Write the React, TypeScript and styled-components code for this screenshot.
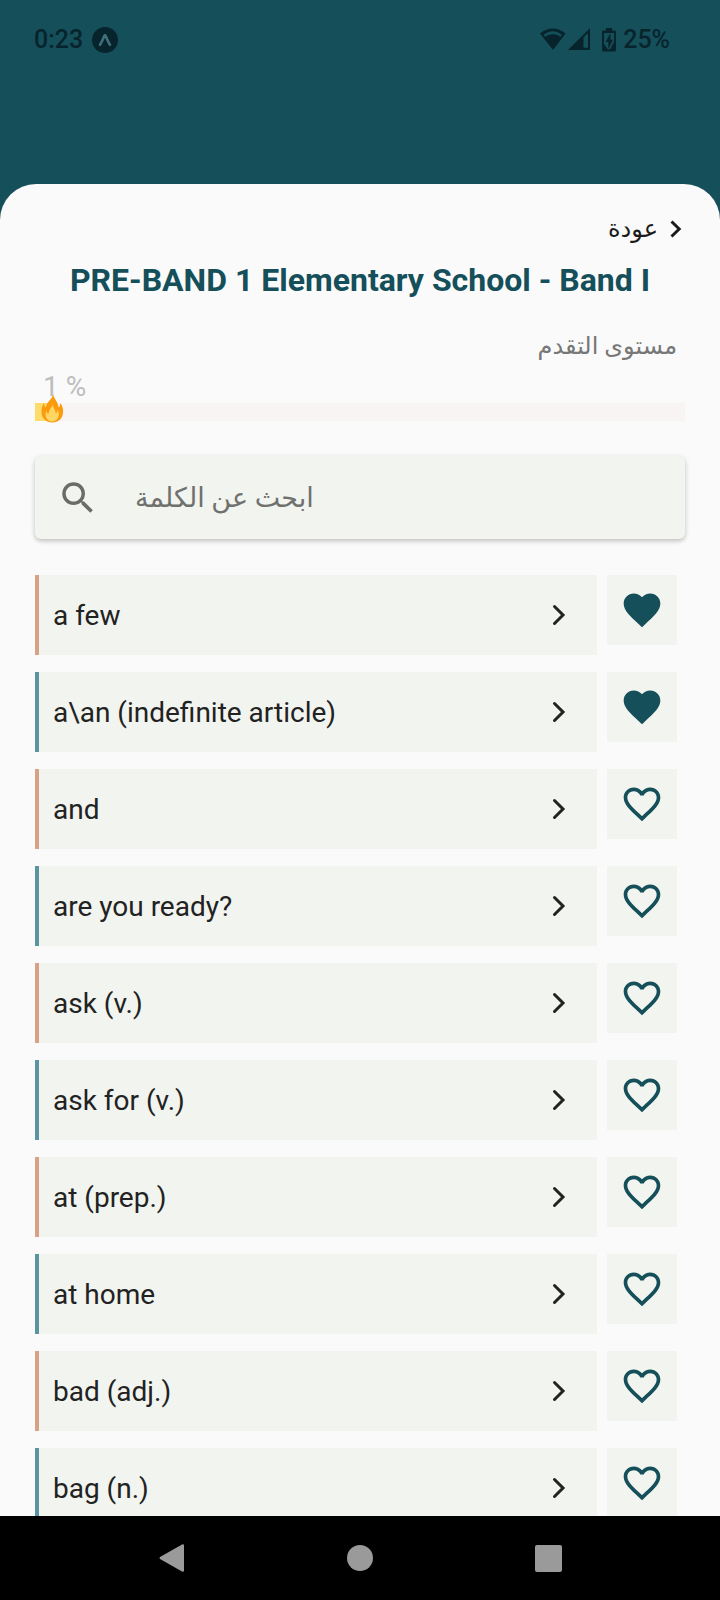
import React, { useState } from "react";
import styled, { createGlobalStyle } from "styled-components";
import { MdFavorite, MdFavoriteBorder, MdSearch } from "react-icons/md";

const GlobalStyle = createGlobalStyle`
  * { box-sizing: border-box; }
  body { margin: 0; background: #fafafa; font-family: Roboto, "DejaVu Sans", sans-serif; }
  button, input { font-family: inherit; margin: 0; padding: 0; border: 0; background: none; color: inherit; }
  button { cursor: pointer; }
  h1, p, ul { margin: 0; padding: 0; }
  svg { display: block; flex: none; }
`;

const Screen = styled.div`
  display: flex;
  flex-direction: column;
  height: 100vh;
  background: #154f5a;
`;

const StatusBar = styled.header`
  display: flex;
  justify-content: space-between;
  align-items: center;
  height: 80px;
  margin-bottom: 104px;
  padding: 0 50px 0 34px;
  color: #07242d;
  font-size: 25px;
  font-weight: 500;
  line-height: 32px;
  flex: none;
`;

const StatusGroup = styled.div<{ $gap: number }>`
  display: flex;
  align-items: center;
  gap: ${(p) => p.$gap}px;
`;

const Sheet = styled.main`
  display: flex;
  flex-direction: column;
  flex: 1;
  min-height: 0;
  overflow: hidden;
  padding: 28px 35px 0;
  border-radius: 36px 36px 0 0;
  background: #fafafa;
`;

const BackButton = styled.button`
  display: flex;
  align-items: center;
  align-self: flex-start;
  gap: 12px;
  height: 34px;
  padding: 0 3px;
  color: #1b1b1b;
  font-size: 24px;
  line-height: 34px;
`;

const BackRow = styled.nav`
  display: flex;
  flex: none;
`;

const Title = styled.h1`
  margin-top: 14px;
  color: #154f5a;
  font-size: 32px;
  font-weight: 700;
  line-height: 40px;
  text-align: center;
`;

const ProgressLabel = styled.p`
  margin-top: 28px;
  padding: 0 8px;
  color: #777777;
  font-size: 24px;
  line-height: 36px;
`;

const Percent = styled.p`
  margin-top: 8px;
  padding: 0 8px;
  color: #bdbdbd;
  font-size: 28px;
  line-height: 30px;
`;

const Track = styled.div`
  position: relative;
  flex: none;
  height: 18px;
  margin-top: 1px;
  background: #f8f4f4;
`;

const Fill = styled.div`
  width: 16px;
  height: 100%;
  background: #fddc6c;
`;

const Flame = styled.svg`
  position: absolute;
  left: 6px;
  bottom: -2px;
`;

const SearchBox = styled.label`
  display: flex;
  align-items: center;
  flex: none;
  gap: 36px;
  height: 83px;
  margin-top: 35px;
  padding: 0 22px;
  border-radius: 6px;
  background: #f2f4ef;
  color: #6a6c69;
  box-shadow: 0 2px 5px rgba(0, 0, 0, 0.24);
`;

const SearchInput = styled.input`
  flex: 1;
  min-width: 0;
  height: 48px;
  outline: none;
  font-size: 27px;
  &::placeholder { color: #6f716e; opacity: 1; }
`;

const WordList = styled.ul`
  display: flex;
  flex-direction: column;
  gap: 17px;
  margin-top: 36px;
  list-style: none;
`;

const WordRow = styled.li`
  display: flex;
  align-items: flex-start;
  gap: 10px;
  padding-right: 8px;
`;

const WordButton = styled.button<{ $accent: string }>`
  display: flex;
  align-items: center;
  justify-content: space-between;
  flex: 1;
  height: 80px;
  padding: 0 31px 0 14px;
  border-left: 4px solid ${(p) => p.$accent};
  background: #f2f4ef;
  color: #222222;
  font-size: 28px;
  line-height: 36px;
  text-align: left;
`;

const WordText = styled.span`
  padding-top: 2px;
`;

const HeartButton = styled.button`
  display: flex;
  align-items: center;
  justify-content: center;
  width: 70px;
  height: 70px;
  background: #f2f4ef;
  color: #154f5a;
`;

const SystemNav = styled.nav`
  display: flex;
  flex: none;
  height: 84px;
  padding: 0 78px;
  background: #000000;
`;

const NavButton = styled.button`
  display: flex;
  align-items: center;
  justify-content: center;
  flex: 1;
  color: #9a9a9a;
`;

const words = [
  "a few",
  "a\\an (indefinite article)",
  "and",
  "are you ready?",
  "ask (v.)",
  "ask for (v.)",
  "at (prep.)",
  "at home",
  "bad (adj.)",
  "bag (n.)",
];

const ExpoBadge = () => (
  <svg width="26" height="26" viewBox="0 0 26 26" aria-hidden="true">
    <circle cx="13" cy="13" r="13" fill="currentColor" />
    <path d="M8 17.800C10 15 11.500 11 12.300 9Q13 7.600 13.700 9C14.500 11 16 15 18 17.800" fill="none" stroke="#3f7079" strokeWidth="2.600" strokeLinecap="round" />
  </svg>
);

const SignalIcons = () => (
  <svg width="50" height="24" viewBox="0 0 50 24" aria-hidden="true">
    <path d="M0 5.500Q12.500-4.500 25.500 5.500L13 22Z" fill="currentColor" />
    <path d="M3.600 7Q12.800-.5 22 7L20.600 8.800Q12.800 3.200 5 8.800Z" fill="#154f5a" />
    <path d="M50 0V22H28Z" fill="currentColor" />
    <path d="M48 5V19.800H43.500V9.500Z" fill="#154f5a" />
  </svg>
);

const BatteryIcon = () => (
  <svg width="14" height="24" viewBox="0 0 14 24" aria-hidden="true">
    <path d="M4 0H10V2.500H12.500Q14 2.500 14 4V22Q14 23.500 12.500 23.500H1.500Q0 23.500 0 22V4Q0 2.500 1.500 2.500H4Z" fill="currentColor" />
    <path d="M2 5H12V20L7 21.500L2 20Z" fill="#154f5a" />
    <path d="M8.500 5L3.500 14H6.300V21L11 11.800H8.500Z" fill="currentColor" />
    <path d="M2 16L6 21.500H2ZM12 14L8 21.500H12Z" fill="currentColor" />
  </svg>
);

const RowChevron = () => (
  <svg width="14" height="22" viewBox="0 0 14 22" aria-hidden="true">
    <path d="M2.500 2.500L11 11L2.500 19.500" fill="none" stroke="currentColor" strokeWidth="3" strokeLinecap="round" />
  </svg>
);

const BackChevron = () => (
  <svg width="12" height="18" viewBox="0 0 12 18" aria-hidden="true">
    <path d="M1.500 1.500L9.200 9L1.500 16.500" fill="none" stroke="currentColor" strokeWidth="3" />
  </svg>
);

const WordItem = ({ word, index }: { word: string; index: number }) => {
  const [liked, setLiked] = useState(index < 2);
  return (
    <WordRow>
      <WordButton $accent={index % 2 === 0 ? "#d6a283" : "#58959e"}>
        <WordText>{word}</WordText>
        <RowChevron />
      </WordButton>
      <HeartButton aria-label={`Favorite ${word}`} aria-pressed={liked} onClick={() => setLiked(!liked)}>
        {liked ? <MdFavorite size={44} /> : <MdFavoriteBorder size={44} />}
      </HeartButton>
    </WordRow>
  );
};

export default function App() {
  return (
    <>
      <GlobalStyle />
      <Screen>
        <StatusBar>
          <StatusGroup $gap={9}>
            0:23
            <ExpoBadge />
          </StatusGroup>
          <StatusGroup $gap={7}>
            <StatusGroup $gap={12}>
              <SignalIcons />
              <BatteryIcon />
            </StatusGroup>
            25%
          </StatusGroup>
        </StatusBar>
        <Sheet>
          <BackRow dir="rtl">
            <BackButton>
              <BackChevron />
              عودة
            </BackButton>
          </BackRow>
          <Title>PRE-BAND 1 Elementary School - Band I</Title>
          <ProgressLabel id="progress-label" dir="rtl">مستوى التقدم</ProgressLabel>
          <Percent>1 %</Percent>
          <Track role="progressbar" aria-labelledby="progress-label" aria-valuenow={1} aria-valuemin={0} aria-valuemax={100}>
            <Fill />
            <Flame width="23" height="29" viewBox="0 0 23 29" aria-hidden="true">
              <path d="M12.200 0C12.500 4.500 17.500 8 17.600 13.500C18.800 12.500 19.300 11 19 9C21.500 11.500 22.500 15 22 19C21.400 25 17 28.500 11.500 28.500C5 28.500 .5 24 .5 18C.5 14 1.500 11 3.200 8.500C3 11 3.500 12.500 5 13.500C5 8 11.500 5.500 12.200 0Z" fill="#fb9a0c" />
              <path d="M11.500 10C11.500 13 14.500 15 14.800 19.500C16 18.500 16.600 17 16.600 15.500C19 20 18 27 11.500 27.500C5 27.500 3.500 21.500 5.200 16.500C5.500 18 6.200 19.500 7.600 20C7.500 16 11 14 11.500 10Z" fill="#fdd663" />
            </Flame>
          </Track>
          <SearchBox>
            <MdSearch size={42} aria-hidden="true" />
            <SearchInput type="text" aria-label="ابحث عن الكلمة" placeholder="ابحث عن الكلمة" />
          </SearchBox>
          <WordList>
            {words.map((word, i) => (
              <WordItem key={word} word={word} index={i} />
            ))}
          </WordList>
        </Sheet>
        <SystemNav>
          <NavButton aria-label="Back">
            <svg width="26" height="28" viewBox="0 0 26 28"><path d="M23.500.3Q25 0 25 1.500V26.500Q25 28 23.500 27.700L1 15Q0 14 1 13Z" fill="currentColor" /></svg>
          </NavButton>
          <NavButton aria-label="Home">
            <svg width="26" height="26" viewBox="0 0 26 26"><circle cx="13" cy="13" r="13" fill="currentColor" /></svg>
          </NavButton>
          <NavButton aria-label="Recent apps">
            <svg width="27" height="27" viewBox="0 0 27 27"><rect width="27" height="27" rx="2" fill="currentColor" /></svg>
          </NavButton>
        </SystemNav>
      </Screen>
    </>
  );
}
